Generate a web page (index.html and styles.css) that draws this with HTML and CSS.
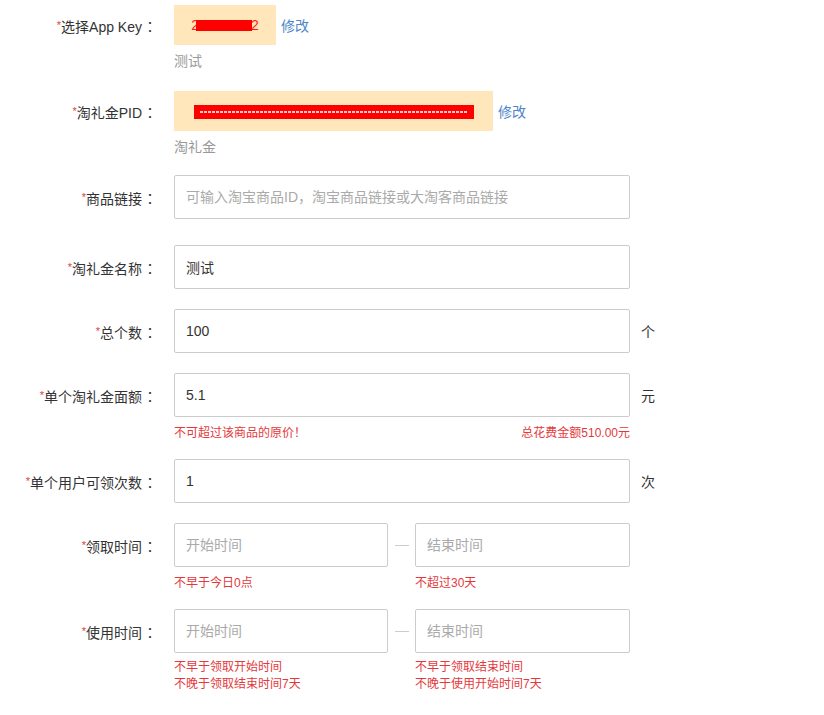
FILE: index.html
```html
<!DOCTYPE html>
<html lang="zh-CN">
<head>
<meta charset="utf-8">
<title>淘礼金</title>
<link rel="stylesheet" href="styles.css">
</head>
<body>
<div class="form">
  <div class="row row-key">
    <div class="label h40"><span class="req">*</span>选择App Key<span class="colon">：</span></div>
    <div class="field">
      <div class="line">
        <div class="keybox appkey"><span class="masked">2<span class="mask mask-key"></span>2</span></div>
        <a class="edit">修改</a>
      </div>
      <div class="sub">测试</div>
    </div>
  </div>

  <div class="row row-pid">
    <div class="label h40"><span class="req">*</span>淘礼金PID<span class="colon">：</span></div>
    <div class="field">
      <div class="line">
        <div class="keybox pid"><span class="mask mask-pid"></span></div>
        <a class="edit">修改</a>
      </div>
      <div class="sub">淘礼金</div>
    </div>
  </div>

  <div class="row row-link">
    <div class="label"><span class="req">*</span>商品链接<span class="colon">：</span></div>
    <div class="field">
      <input class="input" type="text" placeholder="可输入淘宝商品ID，淘宝商品链接或大淘客商品链接">
    </div>
  </div>

  <div class="row row-gap20">
    <div class="label"><span class="req">*</span>淘礼金名称<span class="colon">：</span></div>
    <div class="field">
      <input class="input" type="text" value="测试">
    </div>
  </div>

  <div class="row row-gap20">
    <div class="label"><span class="req">*</span>总个数<span class="colon">：</span></div>
    <div class="field">
      <div class="line">
        <input class="input" type="text" value="100">
        <span class="unit">个</span>
      </div>
    </div>
  </div>

  <div class="row row-gap18">
    <div class="label"><span class="req">*</span>单个淘礼金面额<span class="colon">：</span></div>
    <div class="field">
      <div class="line">
        <input class="input" type="text" value="5.1">
        <span class="unit">元</span>
      </div>
      <div class="hints">
        <span>不可超过该商品的原价！</span>
        <span>总花费金额510.00元</span>
      </div>
    </div>
  </div>

  <div class="row row-gap20">
    <div class="label"><span class="req">*</span>单个用户可领次数<span class="colon">：</span></div>
    <div class="field">
      <div class="line">
        <input class="input" type="text" value="1">
        <span class="unit">次</span>
      </div>
    </div>
  </div>

  <div class="row row-gap18">
    <div class="label"><span class="req">*</span>领取时间<span class="colon">：</span></div>
    <div class="field">
      <div class="range">
        <input class="input input-l" type="text" placeholder="开始时间">
        <span class="dash"></span>
        <input class="input input-r" type="text" placeholder="结束时间">
        <div class="rhint rhint-l">不早于今日0点</div>
        <div class="rhint rhint-r">不超过30天</div>
      </div>
    </div>
  </div>

  <div class="row">
    <div class="label"><span class="req">*</span>使用时间<span class="colon">：</span></div>
    <div class="field">
      <div class="range">
        <input class="input input-l" type="text" placeholder="开始时间">
        <span class="dash"></span>
        <input class="input input-r" type="text" placeholder="结束时间">
        <div class="rhint rhint-l multi">不早于领取开始时间<br>不晚于领取结束时间7天</div>
        <div class="rhint rhint-r multi">不早于领取结束时间<br>不晚于使用开始时间7天</div>
      </div>
    </div>
  </div>
</div>
</body>
</html>
```

FILE: styles.css
```css
* {
  box-sizing: border-box;
}

html, body {
  margin: 0;
  padding: 0;
  background: #ffffff;
}

body {
  font-family: "Liberation Sans", "Noto Sans CJK SC", sans-serif;
  font-size: 14px;
  color: #333333;
}

.form {
  padding-top: 5px;
  display: flex;
  flex-direction: column;
}

.row {
  display: flex;
  align-items: flex-start;
}

.row-key { margin-bottom: 20px; }
.row-pid { margin-bottom: 18px; }
.row-link { margin-bottom: 26px; }
.row-gap20 { margin-bottom: 20px; }
.row-gap18 { margin-bottom: 18px; }

.label {
  width: 174px;
  flex-shrink: 0;
  padding-right: 17px;
  text-align: right;
  height: 44px;
  line-height: 44px;
  font-size: 14px;
  color: #333333;
  white-space: nowrap;
}

.label.h40 {
  height: 40px;
  line-height: 40px;
}

.colon {
  font-family: "Noto Sans CJK TC", sans-serif;
  display: inline-block;
  width: 14px;
  text-align: center;
  margin-left: 1px;
}

.req {
  color: #e4393c;
  font-size: 11px;
  vertical-align: 3px;
}

.field {
  display: flex;
  flex-direction: column;
}

.line {
  display: flex;
  align-items: center;
}

.keybox {
  height: 40px;
  background: #ffe7bb;
  display: flex;
  align-items: center;
  justify-content: center;
}

.appkey {
  width: 102px;
}

.pid {
  width: 319px;
}

.masked {
  color: #ff1a1a;
  font-size: 14px;
  display: flex;
  align-items: center;
  line-height: 14px;
}

.mask {
  display: block;
  background: #ff0000;
  position: relative;
}

.mask-key {
  width: 56px;
  height: 11px;
  margin: 0 -1px 0 -3px;
}

.mask-pid {
  width: 280px;
  height: 14px;
  margin-top: 1px;
}

.mask-pid::after {
  content: "";
  position: absolute;
  left: 6px;
  right: 6px;
  top: 6px;
  height: 2px;
  background: repeating-linear-gradient(90deg, rgba(255, 215, 215, 0.95) 0 3px, rgba(255, 0, 0, 0) 3px 4px);
}

.edit {
  color: #4d86c9;
  font-size: 14px;
  margin-left: 5px;
  cursor: pointer;
}

.sub {
  margin-top: 6px;
  line-height: 20px;
  font-size: 14px;
  color: #999999;
}

.input {
  width: 456px;
  height: 44px;
  border: 1px solid #cccccc;
  border-radius: 2px;
  padding: 0 11px;
  font-family: "Liberation Sans", "Noto Sans CJK SC", sans-serif;
  font-size: 14px;
  color: #333333;
  background: #ffffff;
  outline: none;
  margin: 0;
}

.input::placeholder {
  color: #aaaaaa;
}

.unit {
  margin-left: 11px;
  font-size: 14px;
  color: #333333;
}

.hints {
  width: 456px;
  margin-top: 8px;
  display: flex;
  justify-content: space-between;
  font-size: 12px;
  line-height: 16px;
  color: #e4393c;
}

.range {
  display: grid;
  grid-template-columns: 214px 27px 215px;
  align-items: center;
}

.input-l,
.input-r {
  width: 100%;
}

.dash {
  display: block;
  width: 14px;
  height: 1px;
  background: #cccccc;
  justify-self: center;
}

.rhint {
  font-size: 12px;
  line-height: 16px;
  color: #e4393c;
  margin-top: 8px;
  align-self: start;
  white-space: nowrap;
}

.rhint.multi {
  line-height: 17px;
  margin-top: 6px;
}

.rhint-l {
  grid-column: 1;
}

.rhint-r {
  grid-column: 3;
}
```
